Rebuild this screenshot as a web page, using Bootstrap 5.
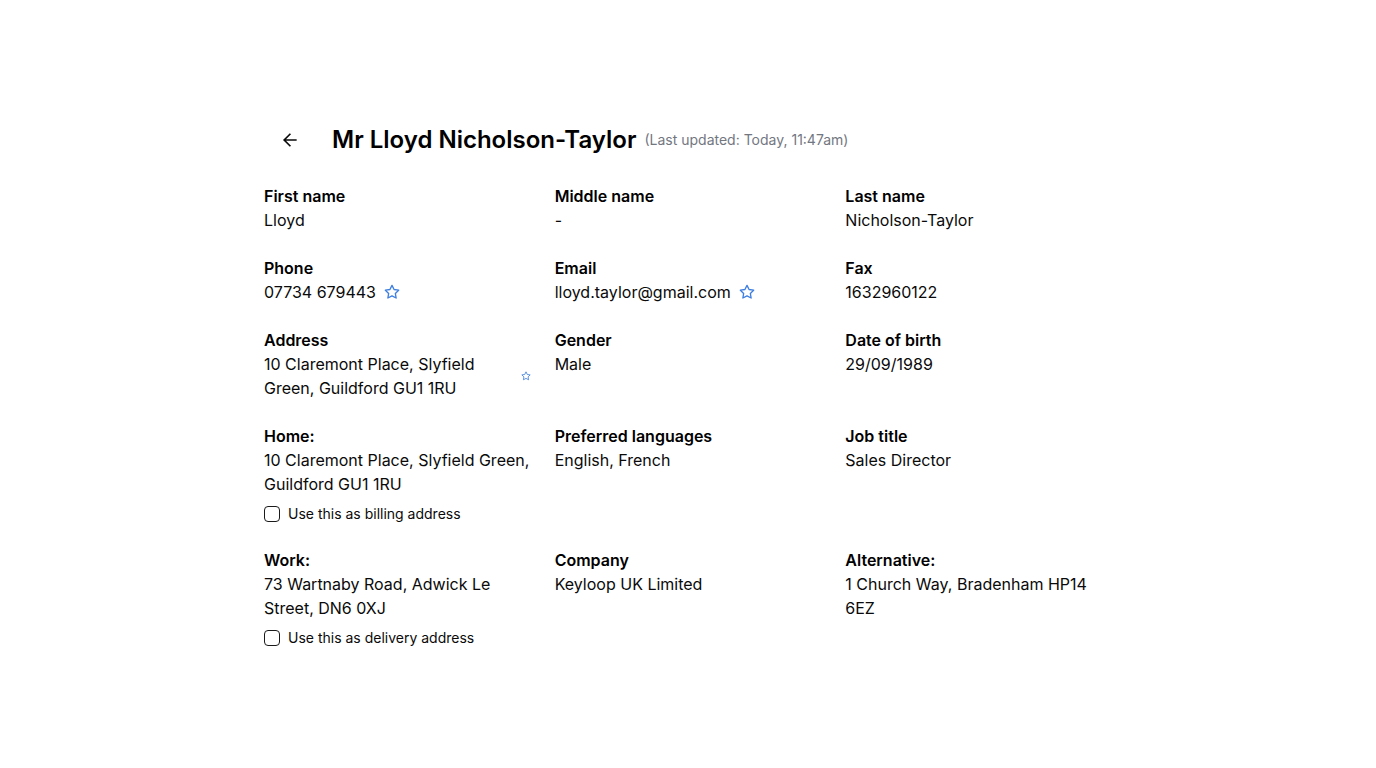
<!DOCTYPE html>
<html lang="en">
<head>
<meta charset="utf-8">
<meta name="viewport" content="width=device-width, initial-scale=1">
<title>Mr Lloyd Nicholson-Taylor</title>
<link href="https://cdn.jsdelivr.net/npm/bootstrap@5.3.0/dist/css/bootstrap.min.css" rel="stylesheet">
<style>
  body { font-family: Inter, sans-serif; font-size: 16px; line-height: 24px; color: #0a0a0a; background: #fff; }
  .profile { max-width: 848px; }
  .back-btn { width: 52px; height: 40px; color: #0a0a0a; }
  .title { font-size: 24px; line-height: 32px; font-weight: 600; color: #000; }
  .updated { font-size: 14px; line-height: 20px; color: #73777f; }
  .details { display: grid; grid-template-columns: repeat(3, minmax(0, 1fr)); column-gap: 24px; row-gap: 24px; }
  .details dt { font-weight: 600; color: #000; }
  .star-btn { color: #3f7fe0; }
  .option { font-size: 14px; line-height: 20px; }
  .option .form-check-input { width: 16px; height: 16px; border: 1px solid #1a1a1a; border-radius: 4px; }
  @media (max-width: 767px) { .details { grid-template-columns: minmax(0, 1fr); } }
</style>
</head>
<body class="min-vh-100 d-flex align-items-center">
<main class="profile w-100 mx-auto">
  <header class="d-flex align-items-center mb-4">
    <button type="button" class="back-btn btn border-0 p-0 me-3 d-flex align-items-center justify-content-center flex-shrink-0" aria-label="Back">
      <svg width="20" height="20" viewBox="0 0 24 24" fill="none" stroke="currentColor" stroke-width="2"><path d="M20 12H5.500M12.500 4.500L5 12L12.500 19.500"/></svg>
    </button>
    <h1 class="title mb-0 me-2">Mr Lloyd Nicholson-Taylor</h1>
    <span class="updated">(Last updated: Today, 11:47am)</span>
  </header>
  <svg class="d-none"><symbol id="star" viewBox="0 0 24 24"><path fill="none" stroke="currentColor" stroke-width="2" stroke-linejoin="round" d="M12 2L15.1 8.3L22 9.3L17 14.1L18.2 21L12 17.8L5.8 21L7 14.1L2 9.3L8.9 8.3Z"/></symbol></svg>
  <dl class="details mb-0">
    <div><dt>First name</dt><dd class="mb-0">Lloyd</dd></div>
    <div><dt>Middle name</dt><dd class="mb-0">-</dd></div>
    <div><dt>Last name</dt><dd class="mb-0">Nicholson-Taylor</dd></div>
    <div><dt>Phone</dt><dd class="mb-0 d-flex align-items-center gap-2">07734 679443 <button type="button" class="star-btn btn border-0 p-0 d-flex" aria-label="Preferred phone"><svg width="16" height="16"><use href="#star"/></svg></button></dd></div>
    <div><dt>Email</dt><dd class="mb-0 d-flex align-items-center gap-2">lloyd.taylor@gmail.com <button type="button" class="star-btn btn border-0 p-0 d-flex" aria-label="Preferred email"><svg width="16" height="16"><use href="#star"/></svg></button></dd></div>
    <div><dt>Fax</dt><dd class="mb-0">1632960122</dd></div>
    <div><dt>Address</dt><dd class="mb-0 d-flex align-items-center gap-2"><span>10 Claremont Place, Slyfield Green, Guildford GU1 1RU</span> <button type="button" class="star-btn btn border-0 p-0 d-flex" aria-label="Preferred address"><svg width="10" height="10"><use href="#star"/></svg></button></dd></div>
    <div><dt>Gender</dt><dd class="mb-0">Male</dd></div>
    <div><dt>Date of birth</dt><dd class="mb-0">29/09/1989</dd></div>
    <div><dt>Home:</dt><dd class="mb-0">10 Claremont Place, Slyfield Green, Guildford GU1 1RU
      <div class="option d-flex align-items-center gap-2 mt-2"><input class="form-check-input m-0" type="checkbox" id="billing"><label for="billing">Use this as billing address</label></div></dd></div>
    <div><dt>Preferred languages</dt><dd class="mb-0">English, French</dd></div>
    <div><dt>Job title</dt><dd class="mb-0">Sales Director</dd></div>
    <div><dt>Work:</dt><dd class="mb-0">73 Wartnaby Road, Adwick Le Street, DN6 0XJ
      <div class="option d-flex align-items-center gap-2 mt-2"><input class="form-check-input m-0" type="checkbox" id="delivery"><label for="delivery">Use this as delivery address</label></div></dd></div>
    <div><dt>Company</dt><dd class="mb-0">Keyloop UK Limited</dd></div>
    <div><dt>Alternative:</dt><dd class="mb-0">1 Church Way, Bradenham HP14 6EZ</dd></div>
  </dl>
</main>
<script src="https://cdn.jsdelivr.net/npm/bootstrap@5.3.0/dist/js/bootstrap.bundle.min.js"></script>
</body>
</html>
